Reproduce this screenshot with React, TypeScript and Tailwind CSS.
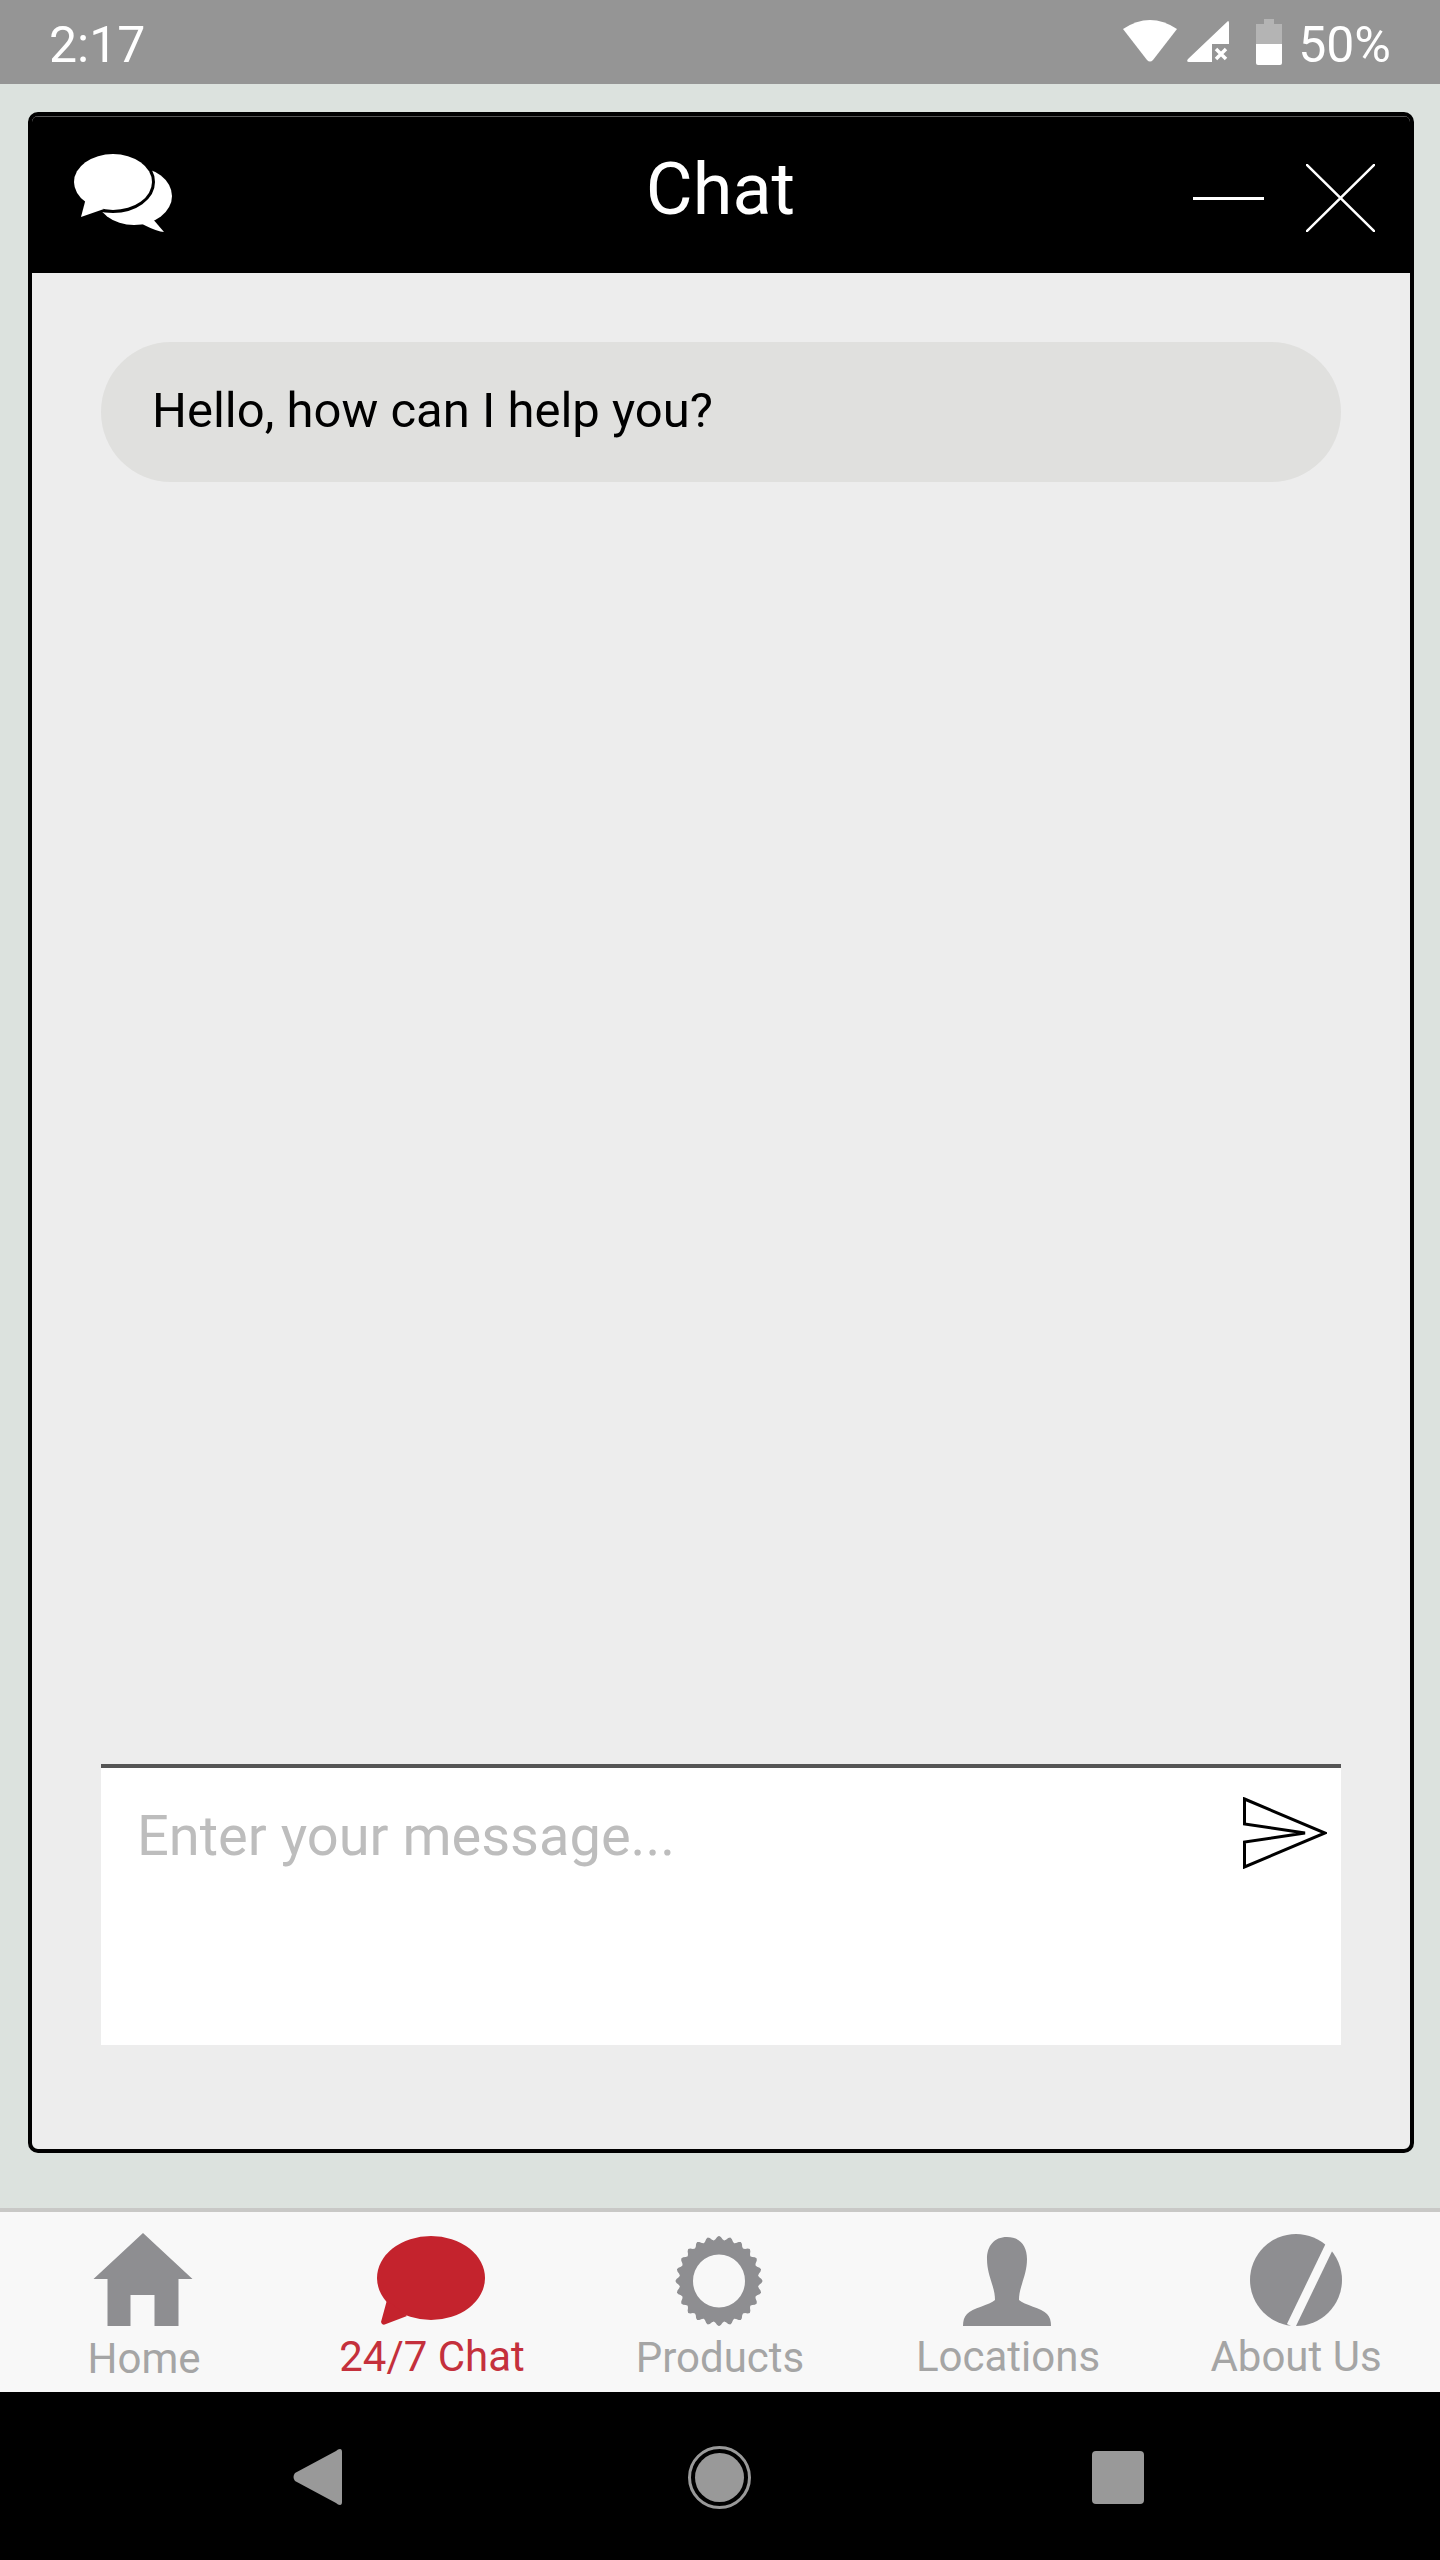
import type React from "react"

const gearPath = () => {
  // scalloped outer edge, 24 teeth
  const points: string[] = []
  for (let i = 0; i < 144; i++) {
    const angle = (i / 144) * Math.PI * 2
    const wave = 1 + 0.05 * Math.cos(angle * 24)
    const x = 44 + 41.5 * wave * Math.sin(angle)
    const y = 45 - 43 * wave * Math.cos(angle)
    points.push(`${i === 0 ? "M" : "L"}${x.toFixed(2)} ${y.toFixed(2)}`)
  }
  return `${points.join(" ")} Z M18 45 a26 26.5 0 1 0 52 0 a26 26.5 0 1 0 -52 0 Z`
}

const HomeIcon = () => (
  <svg width="100" height="93" viewBox="0 0 99 93" fill="#8e8e91" className="ml-[-2px]">
    <path d="M49.5 0 L99 46 L85 46 L85 93 L61 93 L61 62 L37 62 L37 93 L14 93 L14 46 L0 46 Z" />
  </svg>
)

const ChatIcon = () => (
  <svg width="108" height="90" viewBox="0 0 108 90" fill="#c4232d" className="ml-[-2px]">
    <ellipse cx="54" cy="42" rx="54" ry="42" />
    <path d="M10 64 L4 86 Q5 90 9 88 L30 80 Z" />
  </svg>
)

const GearIcon = () => (
  <svg width="88" height="90" viewBox="0 0 88 90" fill="#8e8e91" className="ml-[-2px]">
    <path fillRule="evenodd" d={gearPath()} />
  </svg>
)

const PersonIcon = () => (
  <svg width="90" height="89" viewBox="0 0 90 89" fill="#8e8e91" className="ml-[-3px]">
    <path d="M45 0 C58 0 65 9 65 22 C65 32 62 40 60 47 C58 53 57 58 57 63 C62 68 80 71 85 77 C88 80 89 84 89 89 L1 89 C1 84 2 80 5 77 C10 71 28 68 33 63 C33 58 32 53 30 47 C28 40 25 32 25 22 C25 9 32 0 45 0 Z" />
  </svg>
)

const AboutIcon = () => (
  <svg width="92" height="92" viewBox="0 0 92 92">
    <ellipse cx="46" cy="46" rx="46" ry="46" fill="#8e8e91" />
    <path d="M81 9 L41 92" stroke="#f8f8f8" strokeWidth="9" fill="none" />
  </svg>
)

const navItems: { label: string; icon: React.ReactNode; active?: boolean; mt: string }[] = [
  { label: "Home", icon: <HomeIcon />, mt: "mt-[9px]" },
  { label: "24/7 Chat", icon: <ChatIcon />, active: true, mt: "mt-[7px]" },
  { label: "Products", icon: <GearIcon />, mt: "mt-[8px]" },
  { label: "Locations", icon: <PersonIcon />, mt: "mt-[7px]" },
  { label: "About Us", icon: <AboutIcon />, mt: "mt-[7px]" },
]

export default function App() {
  return (
    <div className="flex h-[2560px] w-[1440px] flex-col overflow-hidden bg-[#dce2de] font-['Roboto',sans-serif]">
      {/* Status bar */}
      <div className="flex h-[84px] items-center justify-between bg-[#959595] pl-[49px] pr-[49px] text-[50px] text-white">
        <span className="mt-[6px]">2:17</span>
        <div className="flex items-center">
          <svg width="54" height="44" viewBox="0 0 54 44" fill="#fff" className="mt-[-2px]">
            <path d="M0 10 Q27 -8 54 10 L30 41 Q27 44 24 41 Z" />
          </svg>
          <svg width="42" height="44" viewBox="0 0 42 44" className="ml-[10px]">
            <path d="M41 1 Q42 1 42 3 L42 24 L25 24 L25 42 L2 42 Q-1 42 1 39 Z" fill="#fff" />
            <path d="M29 29 L39 39 M39 29 L29 39" stroke="#fff" strokeWidth="3.5" />
          </svg>
          <svg width="26" height="46" viewBox="0 0 26 46" className="ml-[27px]">
            <path d="M8 0 L18 0 L18 5 L26 5 L26 25 L0 25 L0 5 L8 5 Z" fill="#b4b4b4" />
            <path d="M0 25 L26 25 L26 44 Q26 46 24 46 L2 46 Q0 46 0 44 Z" fill="#fff" />
          </svg>
          <span className="ml-[16px] mt-[6px]">50%</span>
        </div>
      </div>

      {/* Chat panel */}
      <div className="flex flex-1 flex-col pb-[55px] pl-[28px] pr-[26px] pt-[28px]">
        <div className="flex flex-1 flex-col overflow-hidden rounded-[10px] border-[4px] border-black bg-[#ededed]">
          <div className="grid h-[157px] grid-cols-3 items-center border-t border-[#555] bg-black pl-[42px] pr-[35px]">
            <svg width="98" height="78" viewBox="0 0 98 78" fill="#fff" className="mt-[-4px]">
              <ellipse cx="60" cy="42" rx="38" ry="29" />
              <path d="M78 64 L90 78 Q84 78 68 70 Z" />
              <ellipse cx="39" cy="28" rx="39" ry="28" stroke="#000" strokeWidth="6" paintOrder="stroke" />
              <path d="M12 44 L7 63 L30 55 Z" />
            </svg>
            <span className="mb-[10px] mr-[8px] justify-self-center text-[72px] leading-none text-white">Chat</span>
            <div className="mt-[6px] flex items-center justify-self-end">
              <div className="h-[3px] w-[71px] bg-white" />
              <svg width="69" height="68" viewBox="0 0 69 68" className="ml-[42px]">
                <path d="M0 0 L69 68 M69 0 L0 68" stroke="#fff" strokeWidth="2.5" />
              </svg>
            </div>
          </div>

          <div className="flex flex-1 flex-col px-[69px] pb-[104px] pt-[69px]">
            <div className="flex h-[140px] items-center rounded-[70px] bg-[#e0e0de] pb-[2px] pl-[51px] text-[49px] text-black">
              Hello, how can I help you?
            </div>
            <div className="flex-1" />
            <div className="flex h-[281px] items-start justify-between border-t-[4px] border-[#555] bg-white pl-[36px] pr-[14px] pt-[32px]">
              <span className="text-[56px] leading-[72px] text-[#bdbdbd]">Enter your message...</span>
              <svg width="84" height="72" viewBox="0 0 84 72" fill="none" className="mt-[-3px]">
                <path d="M1.5 2 L82 36 L1.5 70 L1.5 45 L62 36 L1.5 27 Z" stroke="#000" strokeWidth="3" />
              </svg>
            </div>
          </div>
        </div>
      </div>

      {/* Bottom tabs */}
      <div className="grid h-[184px] grid-cols-5 border-t-[4px] border-[#c8c8c6] bg-[#f8f8f8] pt-[21px]">
        {navItems.map((item) => (
          <div key={item.label} className="flex flex-col items-center">
            <div className="flex h-[93px] items-end">{item.icon}</div>
            <span
              className={`${item.mt} text-[42px] leading-[48px] ${item.active ? "text-[#c4303c]" : "text-[#a5a5a5]"}`}
            >
              {item.label}
            </span>
          </div>
        ))}
      </div>

      {/* Android buttons */}
      <div className="flex h-[168px] items-center bg-black pl-[293px] pt-[2px]">
        <svg width="49" height="56" viewBox="0 0 49 56" fill="#999">
          <path d="M47 0 Q49 0 49 3 L49 53 Q49 56 47 56 Q45 56 43 54 L2 32 Q-1 28 2 24 L43 2 Q45 0 47 0 Z" />
        </svg>
        <div className="ml-[346px] flex h-[63px] w-[63px] items-center justify-center rounded-full border-[3px] border-[#999]">
          <div className="h-[49px] w-[49px] rounded-full bg-[#999]" />
        </div>
        <div className="ml-[341px] h-[53px] w-[52px] rounded-[4px] bg-[#999]" />
      </div>
    </div>
  )
}
